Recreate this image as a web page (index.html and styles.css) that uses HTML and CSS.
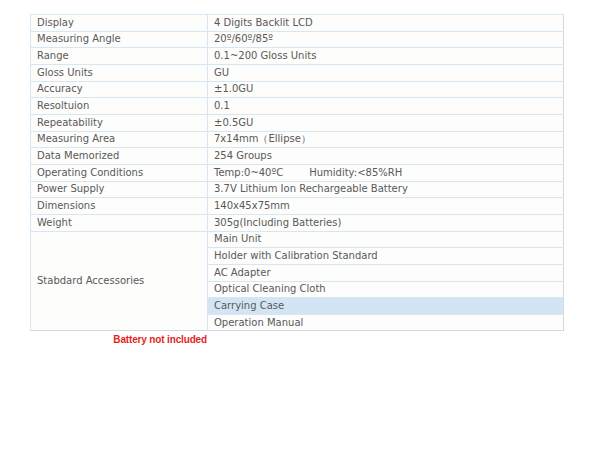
FILE: index.html
```html
<!DOCTYPE html>
<html>
<head>
<meta charset="utf-8">
<link rel="stylesheet" href="styles.css">
</head>
<body>
<div class="page">
  <table class="spec">
    <tr><td class="k">Display</td><td class="v">4 Digits Backlit LCD</td></tr>
    <tr><td class="k">Measuring Angle</td><td class="v">20º/60º/85º</td></tr>
    <tr><td class="k">Range</td><td class="v">0.1~200 Gloss Units</td></tr>
    <tr><td class="k">Gloss Units</td><td class="v">GU</td></tr>
    <tr><td class="k">Accuracy</td><td class="v">±1.0GU</td></tr>
    <tr><td class="k">Resoltuion</td><td class="v">0.1</td></tr>
    <tr><td class="k">Repeatability</td><td class="v">±0.5GU</td></tr>
    <tr><td class="k">Measuring Area</td><td class="v">7x14mm（Ellipse）</td></tr>
    <tr><td class="k">Data Memorized</td><td class="v">254 Groups</td></tr>
    <tr><td class="k">Operating Conditions</td><td class="v">Temp:0~40ºC<span class="gap"></span>Humidity:&lt;85%RH</td></tr>
    <tr><td class="k">Power Supply</td><td class="v">3.7V Lithium Ion Rechargeable Battery</td></tr>
    <tr><td class="k">Dimensions</td><td class="v">140x45x75mm</td></tr>
    <tr><td class="k">Weight</td><td class="v">305g(Including Batteries)</td></tr>
    <tr><td class="k" rowspan="6">Stabdard Accessories</td><td class="v">Main Unit</td></tr>
    <tr><td class="v">Holder with Calibration Standard</td></tr>
    <tr><td class="v">AC Adapter</td></tr>
    <tr><td class="v">Optical Cleaning Cloth</td></tr>
    <tr class="hl"><td class="v">Carrying Case</td></tr>
    <tr class="last"><td class="v">Operation Manual</td></tr>
  </table>
  <p class="note">Battery not included</p>
</div>
</body>
</html>
```
FILE: styles.css
```css
html, body {
  margin: 0;
  padding: 0;
  background: #ffffff;
}
.page {
  padding: 14px 0 0 30px;
}
.spec {
  border-collapse: collapse;
  width: 534px;
  table-layout: fixed;
  background: #fdfdfb;
  font-family: "DejaVu Sans", Verdana, sans-serif;
  font-size: 10px;
  color: #595959;
  border-top: 1px solid #d6e6f2;
  border-left: 1px solid #d6e6f2;
  border-right: 1px solid #d3dadf;
  border-bottom: 1px solid #d3dadf;
}
.spec td {
  height: 15.66px;
  padding: 0 6px;
  border-top: 1px solid #d6e6f2;
  white-space: nowrap;
  vertical-align: middle;
  line-height: 12px;
}
.spec td.k {
  width: 164px;
  border-right: 1px solid #d6e6f2;
}
.spec tr.hl td.v {
  background: #d3e5f5;
}
.gap {
  display: inline-block;
  width: 26px;
}
.note {
  margin: 3px 0 0 0;
  width: 177px;
  text-align: right;
  font-family: "Liberation Sans", Arial, sans-serif;
  font-weight: bold;
  font-size: 10px;
  letter-spacing: -0.15px;
  color: #e21f1f;
}
```
